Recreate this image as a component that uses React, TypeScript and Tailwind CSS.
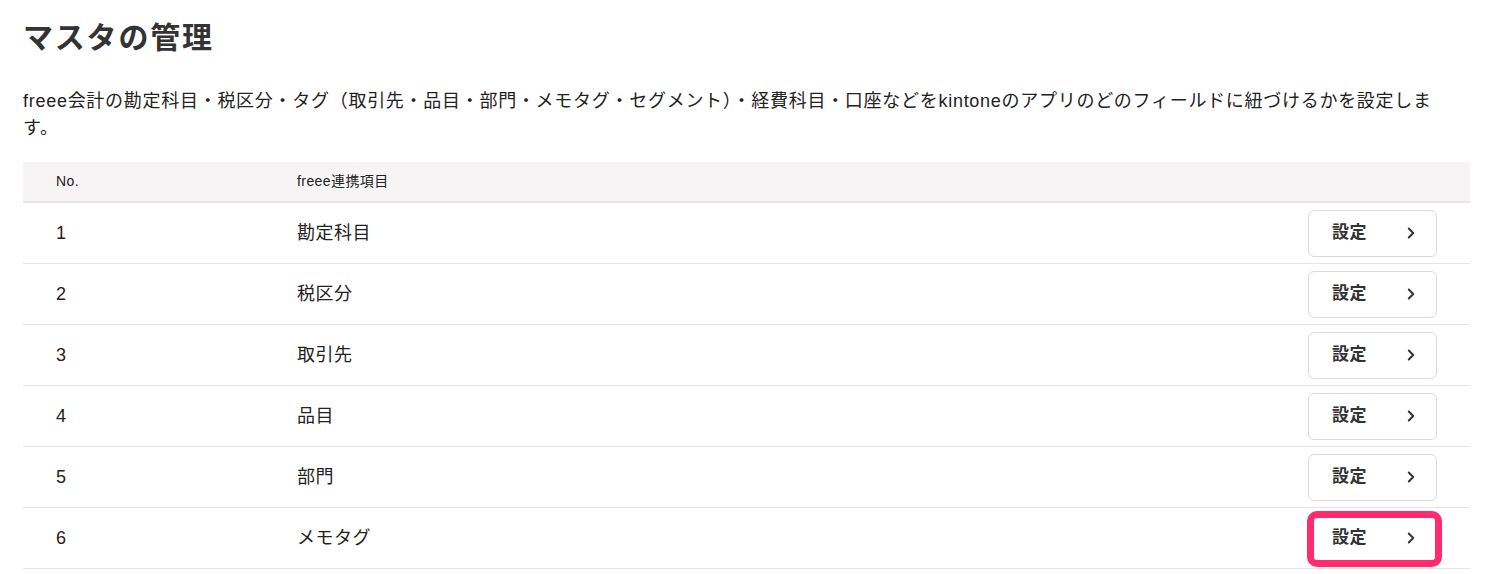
import { ChevronRight } from "lucide-react";

const rows = [
  { no: 1, label: "勘定科目" },
  { no: 2, label: "税区分" },
  { no: 3, label: "取引先" },
  { no: 4, label: "品目" },
  { no: 5, label: "部門" },
  { no: 6, label: "メモタグ", highlight: true },
  { no: 7, label: "セグメント" },
];

const font = { fontFamily: '"Liberation Sans", "Noto Sans CJK JP", sans-serif' };

const SettingButton = ({ highlight }: { highlight?: boolean }) => (
  <div className="relative">
    <button className="flex h-[47px] w-[129px] items-center justify-between rounded-md border border-[#dadada] bg-white pl-[23px] pr-[16px] text-[17px] font-bold tracking-[0.03em] text-[#333]">
      設定
      <ChevronRight size={18} strokeWidth={2.6} className="text-[#333]" />
    </button>
    {highlight && (
      <div className="pointer-events-none absolute -top-[4px] -bottom-[5px] -left-[1px] -right-[5px] rounded-[10px] border-[7px] border-[#ff2b6c]" />
    )}
  </div>
);

export default function App() {
  return (
    <div className="h-[574px] overflow-hidden bg-white px-[23px] pt-[16px] text-[#333]" style={font}>
      <h1 className="text-[30px] font-bold leading-[44px] tracking-[0.06em] text-[#333]">マスタの管理</h1>

      <p className="mt-[28px] w-[1440px] text-[18px] leading-[27px] tracking-[0.04em] text-[#222]">
        freee会計の勘定科目・税区分・タグ（取引先・品目・部門・メモタグ・セグメント）・経費科目・口座などをkintoneのアプリのどのフィールドに紐づけるかを設定します。
      </p>

      <div className="mt-[20px] w-[1447px]">
        <div className="flex h-[41px] items-center border-b-2 border-[#e6e6e6] bg-[#f6f4f4] text-[14px] tracking-[0.03em] text-[#222]">
          <div className="w-[274px] pl-[33px]">No.</div>
          <div>freee連携項目</div>
        </div>
        {rows.map((row) => (
          <div
            key={row.no}
            className="flex h-[61px] items-center border-b border-[#e5e5e5] pr-[33px] text-[18px] tracking-[0.03em] text-[#222]"
          >
            <div className="w-[274px] pl-[33px]">{row.no}</div>
            <div className="flex-1">{row.label}</div>
            <SettingButton highlight={row.highlight} />
          </div>
        ))}
      </div>
    </div>
  );
}
